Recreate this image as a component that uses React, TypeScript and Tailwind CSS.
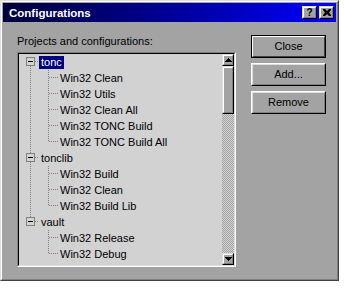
import React from 'react'

const projects = [
  {
    name: 'tonc',
    selected: true,
    configs: ['Win32 Clean', 'Win32 Utils', 'Win32 Clean All', 'Win32 TONC Build', 'Win32 TONC Build All'],
  },
  { name: 'tonclib', selected: false, configs: ['Win32 Build', 'Win32 Clean', 'Win32 Build Lib'] },
  { name: 'vault', selected: false, configs: ['Win32 Release', 'Win32 Debug'] },
]

const dot = { stroke: '#808080', strokeDasharray: '1 1', shapeRendering: 'crispEdges' as const }

function RootRow({ name, selected, first, last }: { name: string; selected: boolean; first: boolean; last: boolean }) {
  return (
    <div className="flex h-4 items-center">
      <svg width="20" height="16" className="shrink-0">
        {!first && <line x1="11.5" y1="0" x2="11.5" y2="3" {...dot} />}
        <rect x="7.5" y="3.5" width="8" height="8" fill="none" stroke="#808080" shapeRendering="crispEdges" />
        <line x1="9" y1="7.5" x2="14" y2="7.5" stroke="#000" shapeRendering="crispEdges" />
        <line x1="16" y1="7.5" x2="20" y2="7.5" {...dot} />
        {!last && <line x1="11.5" y1="12" x2="11.5" y2="16" {...dot} />}
      </svg>
      <span
        className={`h-[13px] px-[2px] leading-[13px] whitespace-nowrap ${
          selected ? 'bg-[#000080] text-white' : 'text-black'
        }`}
      >
        {name}
      </span>
    </div>
  )
}

function ChildRow({ name, parentLast, last }: { name: string; parentLast: boolean; last: boolean }) {
  return (
    <div className="flex h-4 items-center">
      <svg width="39" height="16" className="shrink-0">
        {!parentLast && <line x1="11.5" y1="0" x2="11.5" y2="16" {...dot} />}
        <line x1="29.5" y1="0" x2="29.5" y2={last ? 8 : 16} {...dot} />
        <line x1="30" y1="7.5" x2="39" y2="7.5" {...dot} />
      </svg>
      <span className="h-[13px] px-[2px] leading-[13px] whitespace-nowrap text-black">{name}</span>
    </div>
  )
}

function Arrow({ down }: { down?: boolean }) {
  return (
    <svg width="7" height="4" className={down ? 'rotate-180' : ''}>
      <rect x="3" y="0" width="1" height="1" fill="#000" />
      <rect x="2" y="1" width="3" height="1" fill="#000" />
      <rect x="1" y="2" width="5" height="1" fill="#000" />
      <rect x="0" y="3" width="7" height="1" fill="#000" />
    </svg>
  )
}

function Raised({ className, children }: { className: string; children?: React.ReactNode }) {
  return (
    <div className={`border border-t-[#dfdfdf] border-l-[#dfdfdf] border-b-black border-r-black ${className}`}>
      <div className="flex h-full w-full items-center justify-center border border-t-white border-l-white border-b-[#808080] border-r-[#808080] bg-[#a3a3a3]">
        {children}
      </div>
    </div>
  )
}

function Scrollbar() {
  return (
    <div className="flex w-3 shrink-0 flex-col bg-[repeating-conic-gradient(#d2d2d2_0_25%,#a3a3a3_0_50%)] bg-[length:2px_2px]">
      <Raised className="h-3 w-3">
        <Arrow />
      </Raised>
      <Raised className="h-12 w-3" />
      <div className="flex-1" />
      <Raised className="h-3 w-3">
        <Arrow down />
      </Raised>
    </div>
  )
}

function DialogButton({ label, isDefault }: { label: string; isDefault?: boolean }) {
  if (isDefault) {
    return (
      <div className="h-[23px] w-[75px] border border-black">
        <div className="flex h-full w-full items-center justify-center border border-t-white border-l-white border-b-[#404040] border-r-[#404040] bg-[#a3a3a3] text-black">
          {label}
        </div>
      </div>
    )
  }
  return (
    <div className="h-[23px] w-[75px] border border-t-white border-l-white border-b-black border-r-black">
      <div className="flex h-full w-full items-center justify-center border border-t-[#dfdfdf] border-l-[#dfdfdf] border-b-[#808080] border-r-[#808080] bg-[#a3a3a3] text-black">
        {label}
      </div>
    </div>
  )
}

export default function App() {
  return (
    <div className="h-[288px] w-[344px] bg-white font-['Liberation_Sans',Arial,sans-serif] text-[11px]">
      <div className="h-[281px] w-[339px] border border-t-[#dfdfdf] border-l-[#dfdfdf] border-b-[#404040] border-r-[#404040]">
        <div className="h-full w-full border border-t-white border-l-white border-b-[#808080] border-r-[#808080] bg-[#a3a3a3] p-px">
          {/* Title bar */}
          <div className="flex h-[19px] items-start justify-between bg-gradient-to-r from-[#00003c] to-[#0000ff] pt-[3px] pr-[2px] pl-[6px]">
            <span className="text-[11.5px] leading-[14px] font-bold text-white">Configurations</span>
            <div className="flex gap-[2px]">
              <Raised className="h-[13px] w-[15px]">
                <span className="text-[10px] leading-[10px] font-bold text-black">?</span>
              </Raised>
              <Raised className="h-[13px] w-[15px]">
                <svg width="8" height="7">
                  <path d="M0 0h2l2 2 2-2h2v1L6 3.5 8 6v1H6L4 5 2 7H0V6l2-2.5L0 1z" fill="#000" />
                </svg>
              </Raised>
            </div>
          </div>

          {/* Body */}
          <div className="flex gap-[15px] pt-[13px] pl-[14px]">
            <div className="flex w-[219px] flex-col">
              <div className="mb-1 h-[13px] leading-[13px] text-black">Projects and configurations:</div>
              <div className="h-[215px] border border-t-[#808080] border-l-[#808080] border-b-white border-r-white">
                <div className="flex h-full border border-t-black border-l-black border-b-[#dfdfdf] border-r-[#dfdfdf] bg-[#d2d2d2]">
                  <div className="flex-1 overflow-hidden">
                    {projects.map((p, i) => (
                      <div key={p.name}>
                        <RootRow name={p.name} selected={p.selected} first={i === 0} last={i === projects.length - 1} />
                        {p.configs.map((c, j) => (
                          <ChildRow
                            key={c}
                            name={c}
                            parentLast={i === projects.length - 1}
                            last={j === p.configs.length - 1}
                          />
                        ))}
                      </div>
                    ))}
                  </div>
                  <Scrollbar />
                </div>
              </div>
            </div>

            <div className="flex flex-col gap-[5px]">
              <DialogButton label="Close" isDefault />
              <DialogButton label="Add..." />
              <DialogButton label="Remove" />
            </div>
          </div>
        </div>
      </div>
    </div>
  )
}
